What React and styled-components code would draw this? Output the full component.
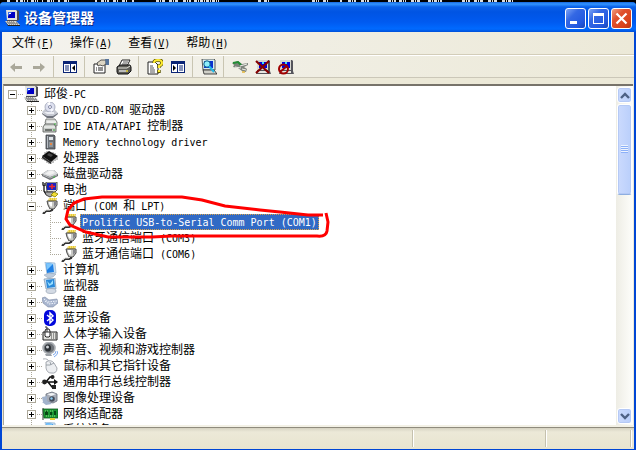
import { useState } from "react";
import styled, { createGlobalStyle, css } from "styled-components";

const GlobalStyle = createGlobalStyle`
  * {
    box-sizing: border-box;
  }
  body {
    margin: 0;
    background: #000;
    color: #000;
    font: 12px/16px "Liberation Sans", "Noto Sans CJK SC", sans-serif;
  }
  button {
    font: inherit;
    color: inherit;
    padding: 0;
    border: 0;
    background: none;
  }
`;

/* ---------- icons ---------- */

const Icon = ({ children }) => (
  <IconSvg width="16" height="16" viewBox="0 0 16 16" aria-hidden="true">
    {children}
  </IconSvg>
);

const computerShape = (
  <>
    <path d="M3 0h10l2 1v9l-2 1H3z" fill="#4c4c54" />
    <path d="M2 0h10l1 1v9H3z" fill="#e2e2dc" />
    <path d="M4 2h7v6H4z" fill="#0000c4" />
    <path d="M4 2h4L4 6z" fill="#3c6cf0" />
    <path d="M5 3h2v1H5z" fill="#fff" />
    <path d="M1 11h11l4 4H4z" fill="#d6d6d0" />
    <path d="M3 12h8M4 13h9M5 14h9" stroke="#55555c" strokeDasharray="1 1" />
    <path d="M1 11l3 5h12v-1H4z" fill="#222" />
  </>
);

// tool bar version, a plain screen that leaves room for the red mark
const screenShape = (
  <>
    <path d="M2 1h12l1 1v10l1 3H1l1-3z" fill="#55555c" />
    <path d="M2 1h11v10H2z" fill="#d8d8d2" />
    <path d="M4 3h8v6H4z" fill="#0000e0" />
    <path d="M7 3h2v2H7z" fill="#3ce0f8" />
    <path d="M1 12h12v2H1z" fill="#e6e6e0" />
  </>
);

const icons = {
  computer: computerShape,
  disc: (
    <>
      <path d="M0 10l3-3h9l4 4-5 4H5z" fill="#c6c9d2" />
      <path d="M0 11l5 3h6l5-3v1l-5 4H5l-5-4z" fill="#70747e" />
      <circle cx="8" cy="5" r="5" fill="#dde0ef" stroke="#9ca1b4" strokeWidth="0.8" />
      <path d="M8 5L5 1l3-1z" fill="#fff" />
      <path d="M8 5l4 3-3 2z" fill="#f8f8ff" />
      <circle cx="8" cy="5" r="1.5" fill="#fff" stroke="#8388a5" />
      <path d="M2 10h10v2H5z" fill="#eceef4" />
    </>
  ),
  ide: (
    <>
      <path d="M4 1h9l2 3v4H5L3 5z" fill="#d9dbd9" stroke="#646864" strokeWidth="0.8" />
      <path d="M1 9l2-3h9l2 3v5H1z" fill="#c8ccc8" stroke="#555955" strokeWidth="0.8" />
      <path d="M2 9h11M5 4h9" stroke="#fff" />
      <path d="M3 12h7" stroke="#505450" strokeWidth="1.5" />
      <path d="M11 12h2M12 6h2" stroke="#2fa52f" />
    </>
  ),
  memory: (
    <>
      <path d="M4 1h8l1 1v13H4z" fill="#6b7076" stroke="#3c4044" strokeWidth="0.8" />
      <path d="M5 2h1v12H5z" fill="#b8bec5" />
      <path d="M7 3h4v3H7z" fill="#dfe4e8" />
      <path d="M7 8h4v5H7z" fill="#8f959b" />
      <path d="M8 9h2v2H8z" fill="#e58745" />
    </>
  ),
  chip: (
    <>
      <path d="M1 7v3M3 8v3M5 10v3M7 11v3M9 11v3M11 10v3M13 8v3M15 7v3M3 4V2M5 3V1M11 2v2M13 3v2" stroke="#888" />
      <path d="M0 6l7-5 9 5-7 6z" fill="#101010" />
      <path d="M5 5l2-2 4 2-2 2z" fill="#484848" />
      <path d="M0 6l9 6v2L0 8z" fill="#2c2c2c" />
    </>
  ),
  drive: (
    <>
      <path d="M0 8l6-4h6l4 4v2l-8 4-8-4z" fill="#6b6e72" />
      <path d="M0 8l6-4h6l4 4-8 3z" fill="#d9dbdd" />
      <path d="M3 8l4-3h4l2 2-5 2z" fill="#f2f2f2" />
      <path d="M1 9l7 3 7-3" stroke="#b2b4b6" fill="none" />
      <path d="M11 11h2" stroke="#35bd38" />
    </>
  ),
  battery: (
    <>
      <path d="M4 0h11v8l-2 2H5z" fill="#dcdcd8" stroke="#222" strokeWidth="0.8" />
      <path d="M5 1h9v7H5z" fill="#1a22c0" />
      <path d="M10 2v5M7 4.5h6" stroke="#f12828" strokeWidth="1.5" />
      <path d="M1 0v3l1 1v5l2 3M3 1v3" stroke="#222" strokeWidth="1.4" fill="none" />
      <path d="M3 10h8l2 2-5 3-4-2z" fill="#aaa" stroke="#222" strokeWidth="0.8" />
      <path d="M9 13l3-3 4 2-3 3z" fill="#f2df35" stroke="#877d00" strokeWidth="0.8" />
    </>
  ),
  port: (
    <>
      <path d="M7 0h8l-1 3H6z" fill="#e8c832" />
      <path d="M7 1h8" stroke="#fff8b8" strokeDasharray="1 1" />
      <path d="M5 3h10v4l-3 4H8L6 7z" fill="#c8c8c4" stroke="#4a4a4a" />
      <path d="M7 4h3v4l-1 1-2-3z" fill="#fff" />
      <path d="M12 4h2v3l-2 2z" fill="#85858a" />
      <path d="M10 11v1l-2 1H4l-3 3" stroke="#333" strokeWidth="2.2" fill="none" />
      <path d="M9 11l-1 1H4l-2 2" stroke="#d6d6d2" fill="none" />
    </>
  ),
  pc: (
    <>
      <path d="M3 0l10 1 1 10-9 1z" fill="#c6def2" stroke="#87a9c9" strokeWidth="0.6" />
      <path d="M4 1l7 1 1 8-7 1z" fill="#2080e4" />
      <path d="M4 1l7 1-6 6z" fill="#7cc6fc" />
      <path d="M2 13l5-2 7 1-3 3-5 1z" fill="#bccbdc" stroke="#8f9fb3" strokeWidth="0.5" />
    </>
  ),
  monitor: (
    <>
      <path d="M2 1l11-1 1 11H4z" fill="#c2daf0" stroke="#8195a9" strokeWidth="0.7" />
      <path d="M4 2l8-1 1 8-8 1z" fill="#2989d9" />
      <path d="M5 3l3 3 3-4v4l-4 2z" fill="#9be0ff" />
      <ellipse cx="9" cy="13" rx="5" ry="2.5" fill="#d3dae4" stroke="#98a4b3" strokeWidth="0.7" />
    </>
  ),
  keyboard: (
    <>
      <path d="M0 4l3-1 4 3 8-1 1 4-5 4H6L1 9z" fill="#a9b6cf" stroke="#7c89a4" strokeWidth="0.6" />
      <path d="M2 5l4 3 9-1M3 7l4 3 7-1" stroke="#f2f6fd" strokeDasharray="1.5 1" fill="none" />
    </>
  ),
  bluetooth: (
    <>
      <rect x="2" y="0" width="12" height="16" rx="5" fill="#0208dc" />
      <path d="M5 5l6 5-3 3V3l3 3-6 5" stroke="#fff" strokeWidth="1.4" fill="none" />
    </>
  ),
  hid: (
    <>
      <path d="M1 6h14v8H1z" fill="#e2e2de" stroke="#222" />
      <path d="M9 8h5M9 10h5M9 12h5" stroke="#444" strokeDasharray="1 1" />
      <path d="M3 5l1-2h3l1 2v5l-1 1H4l-1-1z" fill="#fff" stroke="#222" />
      <path d="M3 6h5M5 3v3M5 3V1H3" stroke="#333" fill="none" />
    </>
  ),
  sound: (
    <>
      <ellipse cx="7" cy="6" rx="6" ry="5.5" fill="#6f747a" stroke="#a9adb2" strokeWidth="1.6" />
      <ellipse cx="6" cy="6" rx="3" ry="3.5" fill="#2b2f34" />
      <ellipse cx="5.5" cy="5" rx="1.5" ry="1.6" fill="#cfd3d8" />
      <path d="M3 12h6l1 2H4z" fill="#9ba0a6" />
      <path d="M11 13q3-1 3-4M12 15q4-2 4-6" stroke="#7ba7ed" fill="none" />
    </>
  ),
  mouse: (
    <>
      <path d="M1 1q5-1 6 3" stroke="#aaaeb5" fill="none" />
      <path d="M4 4q5-3 8 1l3 5q0 6-6 5-4 0-5-5z" fill="#eceef1" stroke="#92979f" strokeWidth="0.8" />
      <path d="M4 7q4 1 8-2M8 4l1 3" stroke="#8c929b" strokeWidth="0.8" fill="none" />
    </>
  ),
  usb: (
    <>
      <path d="M2 8h11M4 8l4-5h2M6 8l4 5h2" stroke="#111" strokeWidth="1.5" fill="none" />
      <path d="M12 5l4 3-4 3z" fill="#111" />
      <circle cx="2.5" cy="8" r="2.4" fill="#222" />
      <circle cx="10.5" cy="3" r="2" fill="#222" />
      <path d="M10 11h4v4h-4z" fill="#222" />
    </>
  ),
  camera: (
    <>
      <path d="M4 4l6-2 5 2v7l-4 2-7-2z" fill="#a7adb8" stroke="#666c78" strokeWidth="0.8" />
      <path d="M5 4l5-1 4 1-5 2z" fill="#f2f4f6" />
      <circle cx="10" cy="9" r="2.8" fill="#434b59" />
      <circle cx="9.5" cy="8.5" r="1.2" fill="#8dcbf3" />
      <path d="M0 7l5-1v7l-4-1zM0 12l6-1 4 3-6 1z" fill="#a2b3cc" />
    </>
  ),
  network: (
    <>
      <path d="M1 2v12" stroke="#777" strokeWidth="1.5" />
      <path d="M1 3h15v9H2z" fill="#1b9633" stroke="#0d5920" strokeWidth="0.8" />
      <path d="M3 5h3v4H3zM8 6h2v3H8zM12 5h2v4h-2z" fill="#064914" />
      <path d="M3 5h3M8 5h3M4 10h9" stroke="#8be27f" strokeDasharray="1 1" />
      <path d="M8 12h5v2H8z" fill="#e8d334" />
    </>
  ),
  back: <path d="M2 8l5-4v3h7v3H7v3z" fill="#aaa89a" />,
  forward: <path d="M14 8L9 4v3H2v3h7v3z" fill="#aaa89a" />,
  treePane: (
    <>
      <path d="M1 2h14v12H1z" fill="#0a2475" />
      <path d="M2 5h6v8H2zM9 5h5v8H9z" fill="#fff" />
      <path d="M3 7h4M3 9h4M3 11h4" stroke="#0a2475" />
      <path d="M13 6v6l-3-3z" fill="#000" />
    </>
  ),
  listPane: (
    <>
      <path d="M1 2h14v12H1z" fill="#0a2475" />
      <path d="M2 5h5v8H2zM8 5h6v8H8z" fill="#fff" />
      <path d="M9 7h4M9 9h4M9 11h4" stroke="#0a2475" />
      <path d="M3 6v6l3-3z" fill="#000" />
    </>
  ),
  properties: (
    <>
      <path d="M1 5h11v9H1z" fill="#fff" stroke="#222" />
      <path d="M3 9h1M5 9h5M3 11h1M5 11h5" stroke="#222" />
      <path d="M4 4l4-3h5v4l-3 2-3-1-2 1z" fill="#ddd6c4" stroke="#333" strokeWidth="0.8" />
      <path d="M12 0h4v6h-3z" fill="#56749c" />
    </>
  ),
  printer: (
    <>
      <path d="M6 1h8l-3 6H3z" fill="#fff" stroke="#222" />
      <path d="M7 3h5M6 5h5" stroke="#555" />
      <path d="M1 8l3-2h10l1 2v4l-3 3H2l-1-2z" fill="#5d5d58" stroke="#111" />
      <path d="M2 9h9l3-2" stroke="#e4e4dc" fill="none" />
      <path d="M3 12h7" stroke="#ddd" strokeWidth="1.4" />
      <path d="M10 12h2" stroke="#e8d638" strokeWidth="1.4" />
    </>
  ),
  help: (
    <>
      <path d="M1 3h7l3 3v9H1z" fill="#fff" stroke="#222" />
      <path d="M3 7h3M3 9h4M3 11h5M3 13h5" stroke="#555" />
      <path d="M7 4q0-3 4-3 4 0 4 3 0 2-3 3v2M12 11v3" stroke="#5e5600" strokeWidth="3.4" fill="none" />
      <path d="M7 4q0-3 4-3 4 0 4 3 0 2-3 3v2M12 11v2" stroke="#ffec32" strokeWidth="2" fill="none" />
    </>
  ),
  scan: (
    <>
      <path d="M1 0h12l1 1v10H2z" fill="#d8ecef" stroke="#333" strokeWidth="0.8" />
      <path d="M3 2h9v7H3z" fill="#0a30d0" />
      <path d="M2 11h11l3 4H3z" fill="#d0d0c8" stroke="#222" strokeWidth="0.8" />
      <circle cx="6" cy="5" r="3.2" fill="#8deefc" stroke="#0a5c88" />
      <path d="M8 7l5 6" stroke="#22b8e8" strokeWidth="2" />
    </>
  ),
  update: (
    <>
      <path d="M0 4l6-2 4 3 6-1v2l-4 2 3 2-1 3-4-1-4-3-5-1 1-2z" fill="#7e847c" />
      <path d="M1 4l5-1 3 3" stroke="#218d34" strokeWidth="2" fill="none" />
      <path d="M8 7l7-2M3 8l6 1M10 10l4 1" stroke="#f0f0ea" />
      <path d="M10 13h3" stroke="#e2b538" strokeWidth="1.6" />
    </>
  ),
  uninstall: (
    <>
      {screenShape}
      <path d="M1 2l13 12M14 2L1 14" stroke="#850000" strokeWidth="2.2" />
    </>
  ),
  disable: (
    <>
      {screenShape}
      <circle cx="5.5" cy="10" r="4.5" stroke="#a00000" strokeWidth="2" fill="none" />
      <path d="M2 13l7-6" stroke="#a00000" strokeWidth="2" />
    </>
  ),
};

/* ---------- data ---------- */

const menus = [
  ["文件", "F"],
  ["操作", "A"],
  ["查看", "V"],
  ["帮助", "H"],
];

const toolGroups = [
  [["back", "后退"], ["forward", "前进"]],
  [["treePane", "显示控制台树"]],
  [["properties", "属性"], ["printer", "打印"]],
  [["help", "帮助"], ["listPane", "操作窗格"]],
  [["scan", "扫描硬件改动"]],
  [["update", "更新驱动程序"], ["uninstall", "卸载"], ["disable", "停用"]],
];

const devices = [
  { icon: "disc", name: "DVD/CD-ROM 驱动器" },
  { icon: "ide", name: "IDE ATA/ATAPI 控制器" },
  { icon: "memory", name: "Memory technology driver" },
  { icon: "chip", name: "处理器" },
  { icon: "drive", name: "磁盘驱动器" },
  { icon: "battery", name: "电池" },
  {
    icon: "port",
    name: "端口 (COM 和 LPT)",
    children: ["Prolific USB-to-Serial Comm Port (COM1)", "蓝牙通信端口 (COM3)", "蓝牙通信端口 (COM6)"],
  },
  { icon: "pc", name: "计算机" },
  { icon: "monitor", name: "监视器" },
  { icon: "keyboard", name: "键盘" },
  { icon: "bluetooth", name: "蓝牙设备" },
  { icon: "hid", name: "人体学输入设备" },
  { icon: "sound", name: "声音、视频和游戏控制器" },
  { icon: "mouse", name: "鼠标和其它指针设备" },
  { icon: "usb", name: "通用串行总线控制器" },
  { icon: "camera", name: "图像处理设备" },
  { icon: "network", name: "网络适配器" },
  { icon: "pc", name: "系统设备" },
];

/* ---------- parts ---------- */

// latin runs are half as wide as the chinese characters
const MixedText = ({ text }) =>
  text.split(/([\x20-\x7e]+)/).map((part, i) => (i % 2 ? <Latin key={i}>{part}</Latin> : part));

const Row = ({ depth, icon, name, open, last, selected, onToggle, onSelect }) => (
  <RowLine>
    {depth > 0 && <Branch />}
    {/* the guide line passes the child rows without an arm */}
    {depth > 1 && <Branch $line="full" />}
    <Branch $line={depth === 0 ? "none" : last ? "half" : "full"} $arm>
      {open !== undefined && (
        <Expander onClick={onToggle} aria-label={(open ? "折叠 " : "展开 ") + name}>
          <svg width="7" height="7" viewBox="0 0 7 7" shapeRendering="crispEdges">
            <path d={open ? "M1 3h5v1H1z" : "M1 3h5v1H1zM3 1h1v5H3z"} fill="#000" />
          </svg>
        </Expander>
      )}
    </Branch>
    <Icon>{icons[icon]}</Icon>
    <Label $selected={selected} onClick={onSelect}>
      <MixedText text={name} />
    </Label>
  </RowLine>
);

function DeviceTree() {
  const [rootOpen, setRootOpen] = useState(true);
  const [opened, setOpened] = useState(["端口 (COM 和 LPT)"]);
  const [selected, setSelected] = useState("Prolific USB-to-Serial Comm Port (COM1)");

  const toggle = (name) => {
    setOpened(opened.includes(name) ? opened.filter((n) => n !== name) : [...opened, name]);
  };

  return (
    <Tree>
      <Row depth={0} icon="computer" name="邱俊-PC" open={rootOpen} onToggle={() => setRootOpen(!rootOpen)} />
      {rootOpen &&
        devices.map(({ icon, name, children = [] }) => {
          const open = opened.includes(name);
          return (
            <div key={name}>
              <Row
                depth={1}
                icon={icon}
                name={name}
                open={open}
                selected={selected === name}
                onToggle={() => toggle(name)}
                onSelect={() => setSelected(name)}
              />
              {open &&
                children.map((child, i) => (
                  <Row
                    key={child}
                    depth={2}
                    icon={icon}
                    name={child}
                    last={i === children.length - 1}
                    selected={selected === child}
                    onSelect={() => setSelected(child)}
                  />
                ))}
            </div>
          );
        })}
      <Marker width="270" height="48" viewBox="0 0 270 48">
        <path
          d="M261 20L246 20 218 17 198 15 163 11 140 5 120 2 103 2 80 2 40 2 22 4 12 8 6 15 4 24 8 30 24 37 46 42 90 42 110 41H255Q264 42 265 36L266 27 264 18"
          fill="none"
          stroke="#f00"
          strokeWidth="3"
        />
      </Marker>
    </Tree>
  );
}

const Chevron = ({ up }) => (
  <svg width="10" height="7" viewBox="0 0 10 7" aria-hidden="true">
    <path d={up ? "M1 6l4-4 4 4" : "M1 1l4 4 4-4"} fill="none" stroke="#4d6185" strokeWidth="2.4" />
  </svg>
);

function App() {
  return (
    <Page>
      <GlobalStyle />
      <Backdrop aria-hidden="true" viewBox="0 0 636 2" preserveAspectRatio="xMinYMin slice">
        <path
          d="M7 1h4M16 1h2M20 1h5M27 1h1M31 1h7M42 1h1M47 1h7M58 1h2M64 1h6M95 1h2M101 1h8M113 1h5M122 1h5M132 1h2M156 1h9M169 1h10M183 1h8M194 1h25M258 1h3M264 1h5M312 1h7M323 1h6M340 1h2M348 1h8M361 1h8M388 1h8M399 1h7M411 1h9M428 1h14M462 1h8M474 1h10M488 1h10M502 1h12"
          stroke="#ddd"
          strokeWidth="2"
          strokeDasharray="3 1 1 1"
        />
      </Backdrop>
      <Window>
        <TitleBar>
          <Icon>{icons.computer}</Icon>
          <Title>设备管理器</Title>
          <CaptionButton aria-label="最小化">
            <svg width="19" height="19" shapeRendering="crispEdges">
              <path d="M4 12h7v3H4z" fill="#fff" />
            </svg>
          </CaptionButton>
          <CaptionButton aria-label="最大化">
            <svg width="19" height="19" shapeRendering="crispEdges">
              <path d="M4 4h11v11H4zM5 7v7h9V7z" fill="#fff" fillRule="evenodd" />
            </svg>
          </CaptionButton>
          <CaptionButton aria-label="关闭" $close>
            <svg width="19" height="19">
              <path d="M4.5 4.5l10 10M14.5 4.5l-10 10" stroke="#fff" strokeWidth="2.2" />
            </svg>
          </CaptionButton>
        </TitleBar>
        <Client>
          <MenuBar>
            {menus.map(([name, key]) => (
              <MenuButton key={key}>
                {name}
                <Latin>
                  (<u>{key}</u>)
                </Latin>
              </MenuButton>
            ))}
          </MenuBar>
          <ToolBar>
            {toolGroups.map((group) => (
              <ToolGroup key={group[0][0]}>
                {group.map(([icon, label]) => (
                  <ToolButton key={icon} aria-label={label} disabled={icon === "back" || icon === "forward"}>
                    <Icon>{icons[icon]}</Icon>
                  </ToolButton>
                ))}
              </ToolGroup>
            ))}
          </ToolBar>
          <TreePanel>
            <DeviceTree />
            <ScrollBar>
              <ScrollArrow aria-label="向上滚动">
                <Chevron up />
              </ScrollArrow>
              <Thumb>
                <Grip />
              </Thumb>
              <ScrollArrow aria-label="向下滚动" $down>
                <Chevron />
              </ScrollArrow>
            </ScrollBar>
          </TreePanel>
          <StatusBar>
            <StatusCell $grow />
            <StatusCell $width={133} />
            <StatusCell $width={85} />
          </StatusBar>
        </Client>
      </Window>
    </Page>
  );
}

export default App;

/* ---------- styles ---------- */

const IconSvg = styled.svg`
  display: block;
  flex: none;
`;

const Latin = styled.span`
  font-family: "DejaVu Sans Mono", "Liberation Mono", monospace;
  font-size: 10px;
  line-height: 1;
  white-space: pre;
`;

const Page = styled.div`
  height: 100vh;
  display: flex;
  flex-direction: column;
`;

const Backdrop = styled.svg`
  display: block;
  flex: none;
  width: 100%;
  height: 2px;
`;

const Window = styled.main`
  flex: 1;
  min-height: 0;
  display: flex;
  flex-direction: column;
  overflow: hidden;
  background: #0046d5;
  border-radius: 4px 4px 0 0;
`;

const TitleBar = styled.header`
  height: 30px;
  flex: none;
  display: flex;
  align-items: center;
  gap: 2px;
  padding: 2px 4px 0;
  background: linear-gradient(#1664dc, #3295ff 2px, #0a60e8 5px, #0054e3 10px, #005af0 20px, #006aff 27px, #0050d8);
`;

const Title = styled.h1`
  flex: 1;
  margin: 0;
  padding-left: 2px;
  color: #fff;
  font-size: 14px;
  font-weight: 700;
  line-height: 20px;
  text-shadow: 1px 1px #0a2a86;
`;

const CaptionButton = styled.button`
  width: 21px;
  height: 21px;
  border: 1px solid #fff;
  border-radius: 3px;
  background: ${({ $close }) =>
    $close
      ? "linear-gradient(135deg, #f0a083, #e0522e 35%, #d9421b 75%, #b93614)"
      : "linear-gradient(135deg, #7ea4f5, #3468e4 35%, #245ae0 75%, #1b46b5)"};

  svg {
    display: block;
  }
`;

const Client = styled.div`
  flex: 1;
  min-height: 0;
  display: flex;
  flex-direction: column;
  margin: 0 2px 1px;
  background: #ece9d8;
`;

const barSurface = css`
  flex: none;
  display: flex;
  background: linear-gradient(90deg, #f4f3ee, #ece9d8);
`;

const MenuBar = styled.nav`
  ${barSurface}
  height: 24px;
  padding: 0 2px;
  border-bottom: 1px solid #fff;
  box-shadow: inset 0 -1px #d3cdb9;
`;

const MenuButton = styled.button`
  height: 22px;
  padding: 0 8px;
  white-space: nowrap;
`;

const ToolBar = styled.div`
  ${barSurface}
  height: 22px;
  padding-left: 2px;
  border-bottom: 1px solid #cbc7b8;
`;

const ToolGroup = styled.div`
  display: flex;

  & + & {
    margin-left: 3px;
    padding-left: 4px;
    border-left: 1px solid #c9c5b2;
  }
`;

const ToolButton = styled.button`
  width: 23px;
  display: grid;
  place-items: center;
`;

const TreePanel = styled.section`
  flex: 1;
  min-height: 0;
  display: flex;
  margin: 6px 1px 0;
  border: solid #aca899;
  border-width: 2px 0 0 1px;
  border-top-color: #77736a;
  background: #fff;
`;

const Tree = styled.div`
  position: relative;
  flex: 1;
  overflow: hidden;
`;

const RowLine = styled.div`
  height: 16px;
  display: flex;
  align-items: center;
`;

const dots = "#aca899 0 1px, transparent 1px 2px";

const Branch = styled.span`
  width: 19px;
  height: 16px;
  flex: none;
  padding: 4px 0 0 4px;
  background-repeat: no-repeat;
  background-image: repeating-linear-gradient(${dots}), repeating-linear-gradient(90deg, ${dots});
  background-position: 8px 0, 8px 8px;
  background-size:
    ${({ $line }) => ($line === "full" ? "1px 16px" : $line === "half" ? "1px 8px" : "0 0")},
    ${({ $arm }) => ($arm ? "11px 1px" : "0 0")};
`;

const Expander = styled.button`
  width: 9px;
  height: 9px;
  display: block;
  border: 1px solid #aca899;
  background: #fff;

  svg {
    display: block;
  }
`;

const Label = styled.span`
  height: 16px;
  margin-left: 3px;
  padding: 0 1px;
  border: 1px solid transparent;
  line-height: 14px;
  white-space: nowrap;
  cursor: default;
  ${({ $selected }) =>
    $selected &&
    css`
      color: #fff;
      background: #316ac5;
      border: 1px dotted #d8a24a;
    `}
`;

const Marker = styled.svg`
  position: absolute;
  left: 58px;
  top: 109px;
  pointer-events: none;
`;

const ScrollBar = styled.div`
  width: 17px;
  flex: none;
  display: flex;
  flex-direction: column;
  gap: 1px;
  padding: 1px;
  background: linear-gradient(90deg, #eeede5, #fefefb);
`;

const scrollPart = css`
  border: 1px solid #fff;
  border-radius: 3px;
  background: linear-gradient(90deg, #cbdafd, #bacffb);
  box-shadow: inset 0 0 0 1px #b5c9f5;
`;

const ScrollArrow = styled.button`
  ${scrollPart}
  height: 16px;
  flex: none;
  display: grid;
  place-items: center;
  ${({ $down }) => $down && "margin-top: auto;"}
`;

const Thumb = styled.div`
  ${scrollPart}
  height: 27%;
  display: grid;
  place-items: center;
  border-bottom-color: #8eaee0;
`;

const Grip = styled.span`
  width: 7px;
  height: 8px;
  background: repeating-linear-gradient(#eef4fe 0 1px, #8cb0f8 1px 2px);
`;

const StatusBar = styled.footer`
  height: 24px;
  flex: none;
  display: flex;
  padding: 3px 2px 2px;
  border-top: 2px solid #f3f1e6;
  background: linear-gradient(#8f8b7d 0 1px, #d6d2c1 1px, #ece9d8 5px, #e8e4cf);
`;

const StatusCell = styled.span`
  flex: ${({ $grow }) => ($grow ? "1" : "none")};
  width: ${({ $width }) => ($width ? `${$width}px` : "auto")};
  border-right: 1px solid #fff;
  box-shadow: inset -1px 0 #c5c1ae;
`;
